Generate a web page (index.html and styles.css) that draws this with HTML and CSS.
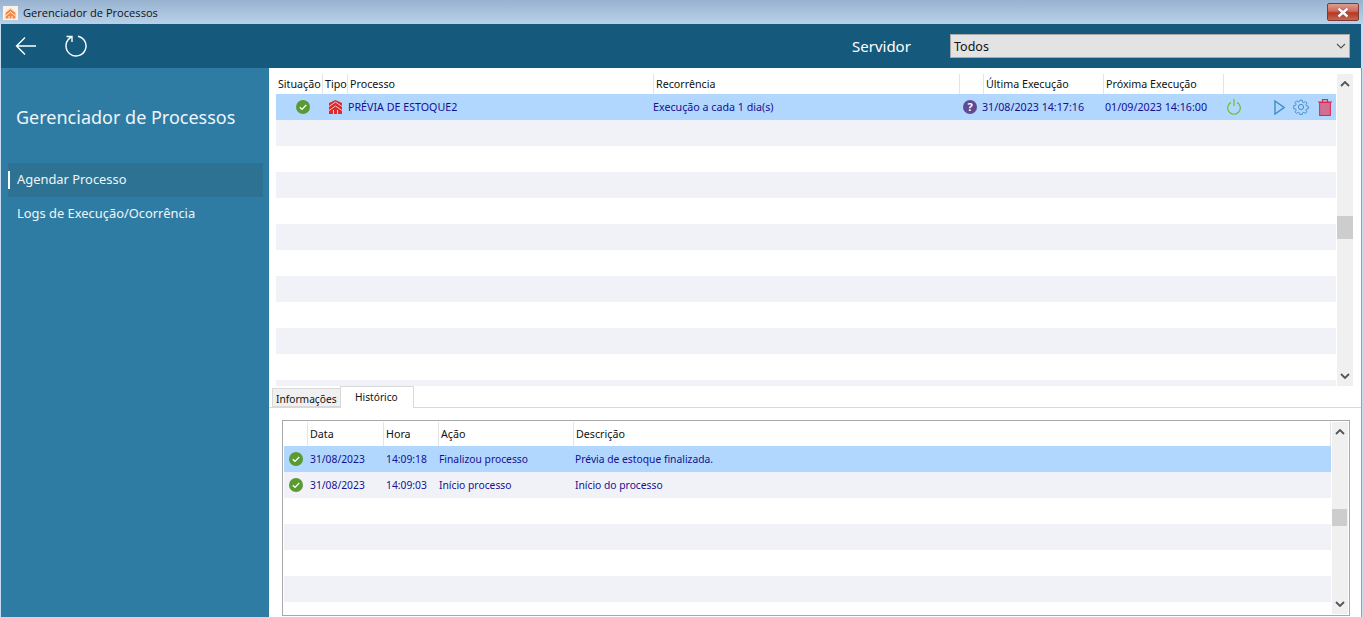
FILE: index.html
```html
<!DOCTYPE html>
<html lang="pt-BR">
<head>
    <meta charset="UTF-8">
    <title>Gerenciador de Processos</title>
    <link rel="stylesheet" href="styles.css">
</head>
<body>
<div class="window">
    <!-- Title bar -->
    <div class="titlebar">
        <svg class="app-icon" width="15" height="14" viewBox="0 0 15 14">
            <rect width="15" height="14" fill="#fdf1e6"/>
            <path d="M7.500 2L12.500 6V12.500H2.500V6z" fill="#f08a4a"/>
            <path d="M1.500 7L7.500 2.500 13.500 7M2.500 10L7.500 6 12.500 10M6 13V10M9 13V10" fill="none" stroke="#fdf1e6" stroke-width="1"/>
        </svg>
        <span class="title-text">Gerenciador de Processos</span>
        <div class="close-btn">
            <svg width="14" height="11" viewBox="0 0 14 11">
                <path d="M2.500 1.500l9 8M11.500 1.500l-9 8" stroke="#7d4a44" stroke-width="3.600"/>
                <path d="M2.500 1.500l9 8M11.500 1.500l-9 8" stroke="#fff" stroke-width="2.400"/>
            </svg>
        </div>
    </div>

    <!-- Toolbar -->
    <div class="toolbar">
        <svg class="tool-back" width="22" height="20" viewBox="0 0 22 20"><path d="M21 10H1.500M10 1.500L1.500 10l8.500 8.500" fill="none" stroke="#fff" stroke-width="1.400"/></svg>
        <svg class="tool-refresh" width="24" height="24" viewBox="0 0 24 24"><path d="M14 2.200A10 10 0 1 1 5.500 4.400L8 2.200M2.500 2.500H8V8" fill="none" stroke="#fff" stroke-width="1.400"/></svg>
        <span class="server-label">Servidor</span>
        <div class="server-select">
            <span>Todos</span>
            <svg width="10" height="6" viewBox="0 0 10 6"><path d="M1 1l4 4 4-4" fill="none" stroke="#555" stroke-width="1.200"/></svg>
        </div>
    </div>

    <div class="main">
        <!-- Side menu -->
        <div class="sidebar">
            <h1 class="side-title">Gerenciador de Processos</h1>
            <div class="side-item active">Agendar Processo</div>
            <div class="side-item">Logs de Execução/Ocorrência</div>
        </div>

        <div class="content">
            <!-- Process grid -->
            <div class="top-grid">
                <div class="grid-body">
                    <div class="row head proc-cols">
                        <span class="hcell">Situação</span>
                        <span class="hcell">Tipo</span>
                        <span class="hcell">Processo</span>
                        <span class="hcell">Recorrência</span>
                        <span class="hcell"></span>
                        <span class="hcell">Última Execução</span>
                        <span class="hcell">Próxima Execução</span>
                        <span class="hcell"></span>
                    </div>
                    <div class="row selected proc-cols">
                        <span class="cell center status-cell"><svg width="14" height="14" viewBox="0 0 14 14"><circle cx="7" cy="7" r="7" fill="#5a9a32"/><path d="M3.800 7.200l2.200 2.200 4.200-4.400" fill="none" stroke="#fff" stroke-width="1.300"/></svg></span>
                        <span class="cell center"><svg width="13" height="14" viewBox="0 0 13 14"><path d="M6.500 0L13 3V14H0V3z" fill="#dd2a2a"/><path d="M0 6.500L6.500 2 13 6.500M0 10.500L6.500 6 13 10.500M4.500 14V10M8.500 14V10" fill="none" stroke="#f6c9c9" stroke-width="1"/></svg></span>
                        <span class="cell">PRÉVIA DE ESTOQUE2</span>
                        <span class="cell">Execução a cada 1 dia(s)</span>
                        <span class="cell center help-cell"><span class="help">?</span></span>
                        <span class="cell">31/08/2023 14:17:16</span>
                        <span class="cell">01/09/2023 14:16:00</span>
                        <span class="cell actions">
                            <svg class="act-power" width="14" height="16" viewBox="0 0 14 16"><path d="M4 3.400a6.300 6.300 0 1 0 6 0M7 0v7" fill="none" stroke="#66c22e" stroke-width="1.200"/></svg>
                            <svg class="act-play" width="11" height="15" viewBox="0 0 11 15"><path d="M1 1l9 6.500L1 14z" fill="none" stroke="#3f8dc4" stroke-width="1.400"/></svg>
                            <svg class="act-gear" width="16" height="16" viewBox="0 0 16 16"><path d="M6.800 1h2.400l.4 2 1.300.6 1.800-1.100 1.600 1.600-1.100 1.800.6 1.300 2 .4v2.400l-2 .4-.6 1.300 1.100 1.800-1.600 1.600-1.800-1.100-1.300.6-.4 1.900H6.800l-.4-1.900-1.300-.6-1.800 1.100-1.600-1.600 1.100-1.800-.6-1.300-2-.4V6.900l2-.4.6-1.300-1.100-1.800 1.600-1.600 1.800 1.100 1.300-.6z" transform="translate(.5 .2) scale(.94)" fill="none" stroke="#3f8dc4"/><circle cx="8" cy="8" r="2.600" fill="none" stroke="#3f8dc4"/></svg>
                            <svg class="act-trash" width="14" height="17" viewBox="0 0 14 17"><path d="M0 3h14M4.500 3V.6h5V3" fill="none" stroke="#e0284f" stroke-width="1.200"/><rect x="1.600" y="3.500" width="10.800" height="13" fill="#cf6f92" stroke="#e0284f"/></svg>
                        </span>
                    </div>
                    <div class="row alt"></div>
                    <div class="row"></div>
                    <div class="row alt"></div>
                    <div class="row"></div>
                    <div class="row alt"></div>
                    <div class="row"></div>
                    <div class="row alt"></div>
                    <div class="row"></div>
                    <div class="row alt"></div>
                    <div class="row"></div>
                    <div class="row alt"></div>
                </div>
                <div class="scrollbar">
                    <svg width="10" height="6" viewBox="0 0 10 6"><path d="M1 5l4-4 4 4" fill="none" stroke="#555" stroke-width="1.800"/></svg>
                    <div class="thumb top-thumb"></div>
                    <svg width="10" height="6" viewBox="0 0 10 6"><path d="M1 1l4 4 4-4" fill="none" stroke="#555" stroke-width="1.800"/></svg>
                </div>
            </div>

            <!-- Tabs -->
            <div class="tabs">
                <div class="tab">Informações</div>
                <div class="tab current">Histórico</div>
            </div>

            <!-- History grid -->
            <div class="tab-panel">
                <div class="hist-grid">
                    <div class="grid-body">
                        <div class="row head hist-cols">
                            <span class="hcell"></span>
                            <span class="hcell">Data</span>
                            <span class="hcell">Hora</span>
                            <span class="hcell">Ação</span>
                            <span class="hcell">Descrição</span>
                        </div>
                        <div class="row selected hist-cols">
                            <span class="cell center"><svg width="14" height="14" viewBox="0 0 14 14"><circle cx="7" cy="7" r="7" fill="#5a9a32"/><path d="M3.800 7.200l2.200 2.200 4.200-4.400" fill="none" stroke="#fff" stroke-width="1.300"/></svg></span>
                            <span class="cell">31/08/2023</span>
                            <span class="cell">14:09:18</span>
                            <span class="cell">Finalizou processo</span>
                            <span class="cell">Prévia de estoque finalizada.</span>
                        </div>
                        <div class="row alt hist-cols">
                            <span class="cell center"><svg width="14" height="14" viewBox="0 0 14 14"><circle cx="7" cy="7" r="7" fill="#5a9a32"/><path d="M3.800 7.200l2.200 2.200 4.200-4.400" fill="none" stroke="#fff" stroke-width="1.300"/></svg></span>
                            <span class="cell">31/08/2023</span>
                            <span class="cell">14:09:03</span>
                            <span class="cell">Início processo</span>
                            <span class="cell">Início do processo</span>
                        </div>
                        <div class="row"></div>
                        <div class="row alt"></div>
                        <div class="row"></div>
                        <div class="row alt"></div>
                    </div>
                    <div class="scrollbar">
                        <svg width="10" height="6" viewBox="0 0 10 6"><path d="M1 5l4-4 4 4" fill="none" stroke="#555" stroke-width="1.800"/></svg>
                        <div class="thumb hist-thumb"></div>
                        <svg width="10" height="6" viewBox="0 0 10 6"><path d="M1 1l4 4 4-4" fill="none" stroke="#555" stroke-width="1.800"/></svg>
                    </div>
                </div>
            </div>
        </div>
    </div>
</div>
</body>
</html>
```

FILE: styles.css
```css
html, body {
    margin: 0;
    padding: 0;
    height: 100%;
    overflow: hidden;
}

.window {
    width: 1363px;
    height: 617px;
    display: flex;
    flex-direction: column;
    background: #c8dcef;
    font-family: "Noto Sans", sans-serif;
    overflow: hidden;
}

/* Title bar */
.titlebar {
    height: 24px;
    flex: none;
    display: flex;
    align-items: center;
    padding: 0 4px 0 3px;
    background: linear-gradient(#98b3d0, #b9d1ea);
}

.app-icon {
    margin-right: 5px;
    margin-top: 1px;
}

.title-text {
    font-family: "Open Sans", sans-serif;
    font-size: 11.1px;
    color: #111;
    flex: 1;
}

.close-btn {
    width: 30px;
    height: 16px;
    display: flex;
    align-items: center;
    justify-content: center;
    border: 1px solid #7a3a36;
    border-radius: 2px;
    background: linear-gradient(#dd9c8e 0, #cf6a5a 45%, #b43a22 55%, #c9644d 100%);
}

/* Toolbar */
.toolbar {
    height: 44px;
    flex: none;
    display: flex;
    align-items: center;
    margin: 0 2px 0 1px;
    padding-right: 11px;
    background: #155a7d;
}

.tool-back {
    margin-left: 14px;
}

.tool-refresh {
    margin-left: 27px;
}

.server-label {
    margin-left: auto;
    width: 98px;
    font-size: 15px;
    color: #fff;
}

.server-select {
    width: 392px;
    height: 22px;
    display: flex;
    align-items: center;
    justify-content: space-between;
    padding: 0 3px 0 3px;
    border: 1px solid #a9a9a9;
    background: #e3e3e3;
    font-size: 12.5px;
    color: #111;
}

/* Main area */
.main {
    flex: 1;
    min-height: 0;
    display: flex;
    margin: 0 1px 0 1px;
    border-right: 1px solid #3cc0ec;
}

.sidebar {
    width: 268px;
    flex: none;
    background: #2e7ca3;
    color: #fff;
    padding: 37px 6px 0 7px;
    box-sizing: border-box;
}

.side-title {
    margin: 0 0 34px 8px;
    font-size: 18px;
    font-weight: normal;
    line-height: 24px;
    color: #eef5f9;
}

.side-item {
    height: 34px;
    line-height: 33px;
    padding-left: 9px;
    font-size: 12.9px;
    color: #eef5f9;
}

.side-item.active {
    display: flex;
    align-items: center;
    padding-left: 0;
    padding-bottom: 1px;
    box-sizing: border-box;
    background: #2d7292;
}

.side-item.active::before {
    content: "";
    width: 2px;
    height: 18px;
    margin-right: 7px;
    background: #fff;
}

.content {
    flex: 1;
    min-width: 0;
    display: flex;
    flex-direction: column;
    background: #fff;
}

/* Grids */
.top-grid {
    height: 318px;
    flex: none;
    display: flex;
    padding: 6px 8px 0 7px;
    box-sizing: border-box;
}

.grid-body {
    flex: 1;
    min-width: 0;
    overflow: hidden;
}

.row {
    height: 26px;
    font-size: 10.7px;
    color: #16108f;
}

.row.alt {
    background: #f1f2f8;
}

.row.selected {
    background: #b1d7fe;
}

.row.head {
    height: 20px;
    color: #111;
    background: #fff;
}

.proc-cols,
.hist-cols {
    display: grid;
    align-items: center;
}

.proc-cols {
    grid-template-columns: 47px 25px 306px 306px 24px 120px 120px 1fr;
}

.hist-cols {
    grid-template-columns: 24px 76px 55px 135px 1fr;
}

.hcell {
    display: block;
    height: 20px;
    line-height: 20px;
    padding-left: 2px;
    border-right: 1px solid #e4e4e4;
    white-space: nowrap;
    overflow: hidden;
}

.proc-cols .hcell:last-child {
    border-right: none;
}

.cell {
    display: flex;
    align-items: center;
    height: 26px;
    box-sizing: border-box;
    padding-bottom: 1px;
    white-space: nowrap;
}

.hist-cols .cell {
    font-size: 10.3px;
}

.cell.center {
    justify-content: center;
    padding-bottom: 0;
}

.status-cell {
    padding-left: 6px;
}

.help-cell {
    padding-right: 4px;
}

/* per column nudges for the process row */
.proc-cols .cell:nth-child(4) {
    margin-left: -1px;
}

.proc-cols .cell:nth-child(6) {
    margin-left: -2px;
}

.proc-cols .cell:nth-child(7) {
    padding-left: 1px;
}

/* per column nudges for the history rows */
.hist-cols .cell:nth-child(2),
.hist-cols .cell:nth-child(3) {
    padding-left: 2px;
}

.hist-cols .cell:nth-child(5) {
    padding-left: 1px;
}

.help {
    width: 14px;
    height: 14px;
    border-radius: 50%;
    background: #5f4a93;
    color: #fff;
    font-size: 11px;
    font-weight: bold;
    line-height: 14px;
    text-align: center;
}

.actions {
    padding-bottom: 0;
}

.act-power {
    margin-left: 3px;
}

.act-play {
    margin-left: 33px;
}

.act-gear {
    margin-left: 8px;
}

.act-trash {
    margin-left: 9px;
}

.scrollbar {
    width: 16px;
    flex: none;
    margin-left: 1px;
    display: flex;
    flex-direction: column;
    align-items: center;
    justify-content: space-between;
    padding: 7px 0;
    box-sizing: border-box;
    background: #f0f0f0;
}

.thumb {
    width: 100%;
    background: #cdcdcd;
}

.top-thumb {
    height: 23px;
    margin-bottom: 6px;
}

.hist-thumb {
    width: 15px;
    height: 17px;
    margin-bottom: 2px;
    align-self: flex-start;
}

/* Tabs */
.tabs {
    height: 22px;
    flex: none;
    display: flex;
    align-items: flex-end;
    padding-left: 3px;
    border-bottom: 1px solid #d9d9d9;
    box-sizing: border-box;
    font-size: 10.2px;
    color: #111;
}

.tab {
    width: 69px;
    height: 19px;
    line-height: 21px;
    padding: 0 0 0 3px;
    background: #f0f0f0;
    border: 1px solid #d9d9d9;
    box-sizing: border-box;
    white-space: nowrap;
}

.tab.current {
    height: 22px;
    width: 74px;
    padding-left: 14px;
    margin-bottom: -1px;
    margin-left: -1px;
    background: #fff;
    border-bottom: none;
    line-height: 21px;
}

.tab-panel {
    flex: 1;
    min-height: 0;
    padding: 12px 11px 1px 13px;
}

.hist-grid {
    height: 196px;
    display: flex;
    border: 1px solid #a9a9a9;
    box-sizing: border-box;
    padding: 1px;
}

.hist-grid .row.head {
    height: 24px;
}

.hist-grid .hcell {
    height: 24px;
    line-height: 24px;
}
```
